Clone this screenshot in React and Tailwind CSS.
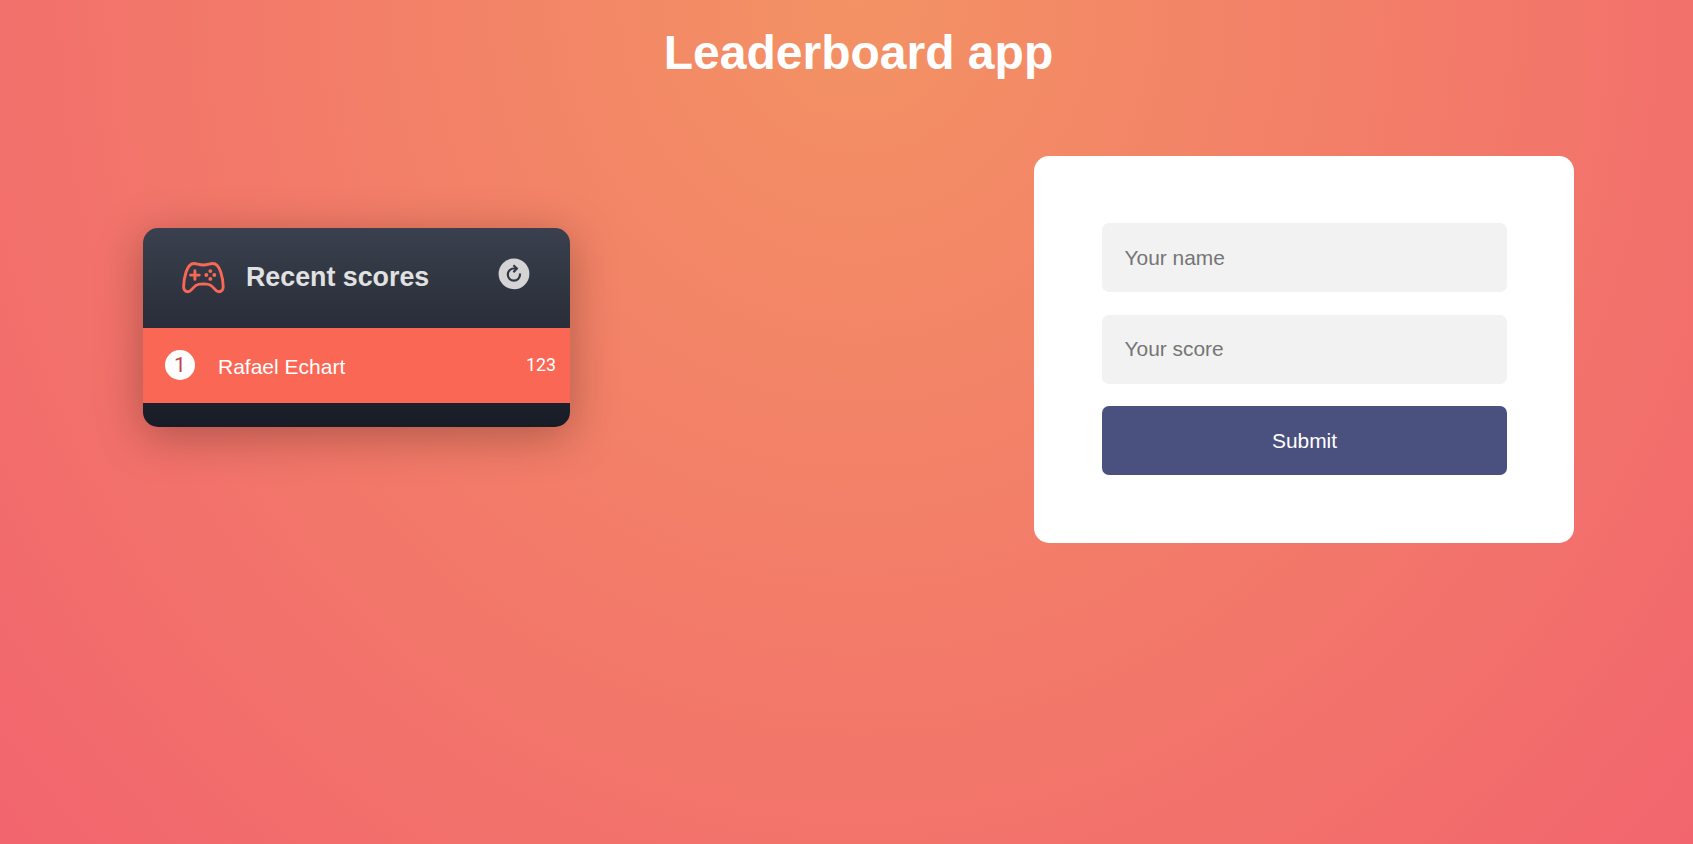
const font = "font-['Liberation_Sans',Arial,sans-serif]";

function GamepadIcon() {
  return (
    <svg className="h-[32px] w-[43px] shrink-0" viewBox="0 0 43 32" fill="none">
      <path
        d="M12 1.5C15.2 1.5 16.6 3 21.4 3S27.4 1.5 30.8 1.5C34.8 1.5 37 4.6 38.8 10.2C40.4 15.4 41.2 20.2 41.2 24.6C41.2 28 39.4 29.7 36.8 29.7C32.6 29.7 31.6 22.4 24.8 22.1C22.6 22 20.2 22 18 22.1C11.2 22.4 10.2 29.7 6 29.7C3.4 29.7 1.6 28 1.6 24.6C1.6 20.2 2.4 15.4 4 10.2C5.8 4.6 8 1.5 12 1.5Z"
        stroke="#fa6855"
        strokeWidth="2.9"
      />
      <path d="M12.9 8.8V17.4M8.5 13.1H17.3" stroke="#fa6855" strokeWidth="2.9" strokeLinecap="round" />
      <g fill="#fa6855">
        <circle cx="28.3" cy="9.1" r="1.95" />
        <circle cx="28.3" cy="16.9" r="1.95" />
        <circle cx="24.3" cy="13" r="1.95" />
        <circle cx="32.3" cy="13" r="1.95" />
      </g>
    </svg>
  );
}

function RefreshIcon() {
  return (
    <svg className="h-8 w-8" viewBox="0 0 32 32" fill="none">
      <circle cx="16" cy="15.8" r="15.4" fill="#d4d4d4" />
      <path d="M22 15.6V16.6A6.1 6.1 0 1 1 15.9 10.5H18.6" stroke="#313643" strokeWidth="2.2" />
      <path d="M15.4 7.2L18.9 10.6L15.4 14.2" stroke="#313643" strokeWidth="2.1" />
    </svg>
  );
}

export default function App() {
  return (
    <div className={`flex h-[844px] w-full flex-col overflow-hidden bg-[radial-gradient(ellipse_1265px_1385px_at_858px_0px,#f39264_0%,#f2606f_100%)] ${font}`}>
      <h1 className="pt-[25px] pl-[24px] text-center text-[48px] leading-[55px] font-bold text-white">Leaderboard app</h1>
      <main className="flex items-start justify-between pt-[76px] pr-[119px] pl-[143px]">
        <section className="mt-[72px] h-[199px] w-[427px] overflow-hidden rounded-[15px] bg-linear-to-b from-[#3a404d] to-[#181c26] shadow-[0_9px_45px_rgba(40,20,10,0.34)]">
          <header className="flex h-[100px] items-start pt-[30px] pr-[40px] pl-[39px]">
            <div className="pt-[4px]">
              <GamepadIcon />
            </div>
            <h2 className="ml-[21px] pt-[4px] text-[26.8px] leading-[31px] font-bold text-[#e1e1e1]">Recent scores</h2>
            <button className="ml-auto" aria-label="Refresh">
              <RefreshIcon />
            </button>
          </header>
          <ol>
            <li className="flex h-[75px] items-center bg-[#fa6855] pr-[14px] pl-[22px] text-white">
              <span className="mb-px flex h-[30px] w-[30px] items-center justify-center rounded-full bg-white font-['Roboto',sans-serif] text-[21px] leading-[30px] text-[#c24448]">1</span>
              <span className="ml-[23px] pt-[3px] text-[21px] leading-6">Rafael Echart</span>
              <span className="mb-[2px] ml-auto font-['Roboto',sans-serif] text-[17.8px] leading-5">123</span>
            </li>
          </ol>
        </section>
        <form className="flex h-[387px] w-[540px] flex-col rounded-[15px] bg-white pt-[67px] pr-[67px] pl-[68px]" onSubmit={(e) => e.preventDefault()}>
          <input className="h-[69px] w-[405px] rounded-[7px] bg-[#f2f2f2] px-[22.5px] text-[20.9px] outline-none placeholder:text-[#757575]" placeholder="Your name" />
          <input className="mt-[23px] h-[69px] w-[405px] rounded-[7px] bg-[#f2f2f2] px-[22.5px] pb-[2px] text-[20.9px] outline-none placeholder:text-[#757575]" placeholder="Your score" />
          <button className="mt-[22px] h-[69px] w-[405px] rounded-[7px] bg-[#4b517e] text-[20.9px] text-white">Submit</button>
        </form>
      </main>
    </div>
  );
}
